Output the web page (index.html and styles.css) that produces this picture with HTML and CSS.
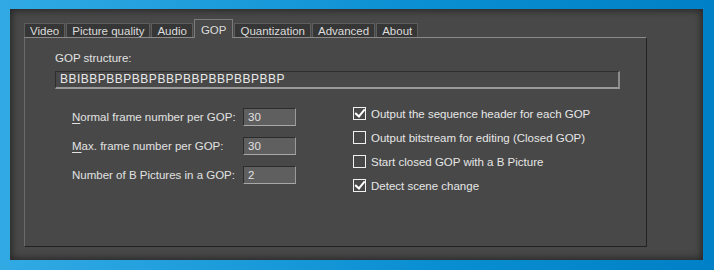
FILE: index.html
```html
<!DOCTYPE html>
<html lang="en">
<head>
    <meta charset="UTF-8">
    <title>GOP settings</title>
    <link rel="stylesheet" href="styles.css">
</head>
<body>
    <div class="panel">
        <div class="tabs">
            <div class="tab">Video</div>
            <div class="tab">Picture quality</div>
            <div class="tab">Audio</div>
            <div class="tab tab-active">GOP</div>
            <div class="tab">Quantization</div>
            <div class="tab">Advanced</div>
            <div class="tab">About</div>
        </div>
        <div class="page">
            <div class="structure">
                <div class="caption">GOP structure:</div>
                <div class="field">BBIBBPBBPBBPBBPBBPBBPBBPBBP</div>
            </div>
            <div class="columns">
                <div class="numbers">
                    <div class="num-row">
                        <span class="num-label"><u>N</u>ormal frame number per GOP:</span>
                        <span class="num-box">30</span>
                    </div>
                    <div class="num-row">
                        <span class="num-label"><u>M</u>ax. frame number per GOP:</span>
                        <span class="num-box">30</span>
                    </div>
                    <div class="num-row">
                        <span class="num-label">Number of B Pictures in a GOP:</span>
                        <span class="num-box">2</span>
                    </div>
                </div>
                <div class="checks">
                    <div class="check-row"><span class="box checked"></span>Output the sequence header for each GOP</div>
                    <div class="check-row"><span class="box"></span>Output bitstream for editing (Closed GOP)</div>
                    <div class="check-row"><span class="box"></span>Start closed GOP with a B Picture</div>
                    <div class="check-row"><span class="box checked"></span>Detect scene change</div>
                </div>
            </div>
        </div>
    </div>
</body>
</html>
```

FILE: styles.css
```css
body {
    margin: 0;
    width: 714px;
    height: 270px;
    overflow: hidden;
    background: linear-gradient(to right, #31aae4, #0a8fd2 60%, #0080c6);
    font-family: "Liberation Sans", Arial, sans-serif;
    font-size: 11.5px;
    color: #e2e2e2;
}
.panel {
    margin: 9px 0 0 10px;
    width: 693px;
    height: 251px;
    box-sizing: border-box;
    padding: 8px 0 0 14px;
    background-color: #484848;
    box-shadow: inset 0 0 7px 2px rgba(0,0,0,0.45);
}
.tabs {
    display: flex;
    align-items: flex-end;
    height: 20px;
}
.tab {
    height: 13px;
    line-height: 14px;
    padding: 0 5px;
    margin-right: 1px;
    background-color: #363636;
    border: 1px solid #5e5e5e;
    border-bottom: none;
    color: #dcdcdc;
}
.tab-active {
    height: 18px;
    line-height: 21px;
    padding: 0 6px;
    margin-bottom: -1px;
    background-color: #484848;
    border-color: #7c7c7c;
}
.page {
    width: 623px;
    height: 210px;
    box-sizing: border-box;
    border-top: 1px solid #8a8a8a;
    border-left: 1px solid #6a6a6a;
    border-right: 1px solid #222;
    border-bottom: 1px solid #222;
    padding: 14px 0 0 30px;
}
.caption {
    height: 19px;
}
.field {
    width: 565px;
    height: 18px;
    box-sizing: border-box;
    border-top: 1px solid #2e2e2e;
    border-left: 1px solid #2e2e2e;
    border-right: 2px solid #8c8c8c;
    border-bottom: 2px solid #9a9a9a;
    padding-left: 4px;
    line-height: 15px;
    font-size: 12px;
    color: #e8e8e8;
    letter-spacing: 0.5px;
}
.columns {
    display: flex;
    margin-top: 19px;
}
.numbers {
    width: 298px;
    padding-left: 17px;
    box-sizing: border-box;
}
.num-row {
    display: flex;
    justify-content: space-between;
    align-items: center;
    width: 224px;
    height: 18px;
    margin-bottom: 11px;
}
.num-row u {
    text-decoration-thickness: 1px;
    text-underline-offset: 2px;
}
.num-box {
    width: 53px;
    height: 18px;
    box-sizing: border-box;
    border-top: 1px solid #2c2c2c;
    border-left: 1px solid #2c2c2c;
    border-right: 1px solid #9a9a9a;
    border-bottom: 1px solid #a8a8a8;
    background-color: #5f5f5f;
    padding-left: 4px;
    line-height: 16px;
}
.checks {
    margin-top: -1px;
}
.check-row {
    display: flex;
    align-items: center;
    height: 13px;
    margin-bottom: 11px;
    color: #e6e6e6;
}
.box {
    width: 13px;
    height: 13px;
    box-sizing: border-box;
    border: 1.5px solid #f0f0f0;
    margin-right: 5px;
    flex: none;
    position: relative;
}
.box.checked::after {
    content: "";
    position: absolute;
    left: 3px;
    top: -1px;
    width: 4px;
    height: 8px;
    border-right: 2px solid #fff;
    border-bottom: 2px solid #fff;
    transform: rotate(40deg);
}
```
